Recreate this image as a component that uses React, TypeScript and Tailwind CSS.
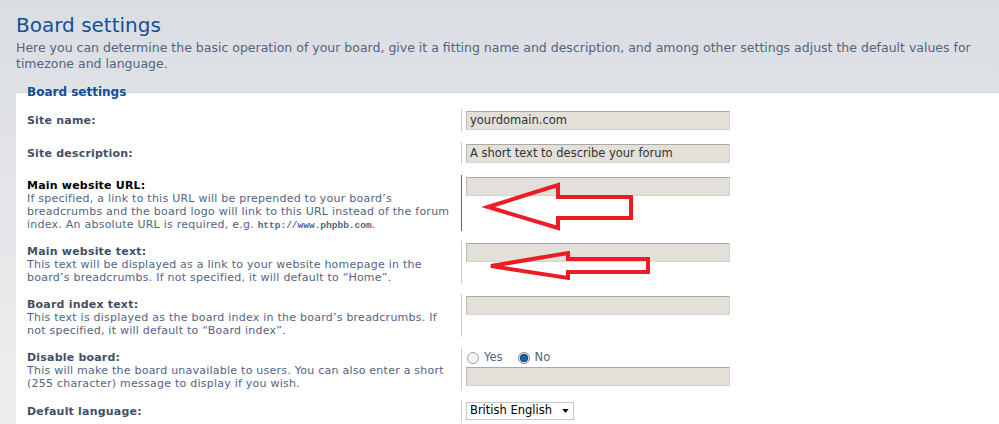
const font = { fontFamily: '"DejaVu Sans", Verdana, sans-serif' }

interface RowProps {
  label: string
  desc?: React.ReactNode
  active?: boolean
  children: React.ReactNode
}

function Row({ label, desc, active, children }: RowProps) {
  return (
    <div className="flex">
      <div
        className={[
          'w-[445px] shrink-0 pl-[11px] pr-[8px]',
          desc ? 'pt-[4px]' : 'pt-[5px]',
        ].join(' ')}
      >
        <div
          className={[
            'text-[11px] font-bold leading-[13px] tracking-[0.2px]',
            active ? 'text-black' : 'text-[#425067]',
          ].join(' ')}
        >
          {label}
        </div>
        {desc && <div className="text-[11px] leading-[13px] tracking-[0.24px] text-[#536482]">{desc}</div>}
      </div>
      <div
        className={[
          'flex-1 border-l py-[2px] pl-[4px]',
          active ? 'border-[#666]' : 'border-[#ccc]',
        ].join(' ')}
      >
        {children}
      </div>
    </div>
  )
}

function TextInput({ value = '' }: { value?: string }) {
  return (
    <div className="flex h-[19px] w-[264px] items-center border border-t-[#aaa9a5] border-l-[#bdb9b3] border-b-[#d6d3ce] border-r-[#d6d3ce] bg-[#e3dfd9] px-[3px] text-[11.5px] text-[#333]">
      {value}
    </div>
  )
}

function Radio({ checked, label }: { checked?: boolean; label: string }) {
  return (
    <span className="flex items-center gap-[5px]">
      <span
        className={[
          'grid h-[12px] w-[12px] place-items-center rounded-full border',
          checked ? 'border-[#7e8a96] bg-[#dfe6ee]' : 'border-[#a4a4a4] bg-[#f3f3f3]',
        ].join(' ')}
      >
        {checked && <span className="h-[6px] w-[6px] rounded-full bg-[#1a66b0] ring-1 ring-[#0c3c70]" />}
      </span>
      <span className="text-[11.5px] text-[#536482]">{label}</span>
    </span>
  )
}

export default function App() {
  return (
    <div
      style={font}
      className="relative h-[424px] w-[999px] overflow-hidden bg-gradient-to-b from-[#dadde2] via-[#e4e6e9] to-[#eeeeee]"
    >
      <div className="px-4 pt-[13px]">
        <h1 className="text-[20px] leading-[24px] text-[#115098]">Board settings</h1>
        <p className="mt-[3px] text-[12.5px] leading-[16px] text-[#536482]">
          Here you can determine the basic operation of your board, give it a fitting name and description, and among
          other settings adjust the default values for timezone and language.
        </p>
      </div>

      <div className="relative ml-4 mt-[20px] h-[400px] border-t border-[#d5d5d5] bg-white pt-[16px]">
        <div className="absolute -top-[9px] left-[11px] text-[12px] font-bold leading-[16px] text-[#115098]">
          Board settings
        </div>

        <div className="flex flex-col gap-[10px]">
          <Row label="Site name:">
            <TextInput value="yourdomain.com" />
          </Row>
          <Row label="Site description:">
            <TextInput value="A short text to describe your forum" />
          </Row>
          <Row
            active
            label="Main website URL:"
            desc={
              <>
                If specified, a link to this URL will be prepended to your board’s breadcrumbs and the board logo will
                link to this URL instead of the forum index. An absolute URL is required, e.g.{' '}
                <span
                  className="font-bold leading-[10px] tracking-normal"
                  style={{ fontFamily: '"Liberation Mono", monospace', fontSize: '9.5px' }}
                >
                  http://www.phpbb.com
                </span>
                .
              </>
            }
          >
            <TextInput />
          </Row>
          <Row
            label="Main website text:"
            desc="This text will be displayed as a link to your website homepage in the board’s breadcrumbs. If not specified, it will default to “Home”."
          >
            <TextInput />
          </Row>
          <Row
            label="Board index text:"
            desc="This text is displayed as the board index in the board’s breadcrumbs. If not specified, it will default to “Board index”."
          >
            <TextInput />
          </Row>
          <Row
            label="Disable board:"
            desc="This will make the board unavailable to users. You can also enter a short (255 character) message to display if you wish."
          >
            <div className="flex h-[18px] items-center gap-[15px] pl-[1px]">
              <Radio label="Yes" />
              <Radio checked label="No" />
            </div>
            <TextInput />
          </Row>
          <Row label="Default language:">
            <div className="flex h-[18px] w-[108px] items-center justify-between border border-[#c8c8c8] bg-white pl-[3px] pr-[4px] text-[11.5px] text-black">
              <span>British English</span>
              <svg viewBox="0 0 8 5" className="h-[4px] w-[7px]">
                <path d="M0 0h8L4 5z" fill="#000" />
              </svg>
            </div>
          </Row>
        </div>
      </div>

      {/* red annotation arrows */}
      <svg className="pointer-events-none absolute left-0 top-0" width="999" height="424">
        <polygon
          points="488,207 558,185 558,197 631,197 631,218 558,218 558,228"
          fill="none"
          stroke="#ed1c24"
          strokeWidth="4"
          strokeLinejoin="miter"
        />
        <polygon
          points="491,266 568,253 568,259 648,259 648,272 568,272 568,278"
          fill="none"
          stroke="#ed1c24"
          strokeWidth="4"
          strokeLinejoin="miter"
        />
      </svg>
    </div>
  )
}
